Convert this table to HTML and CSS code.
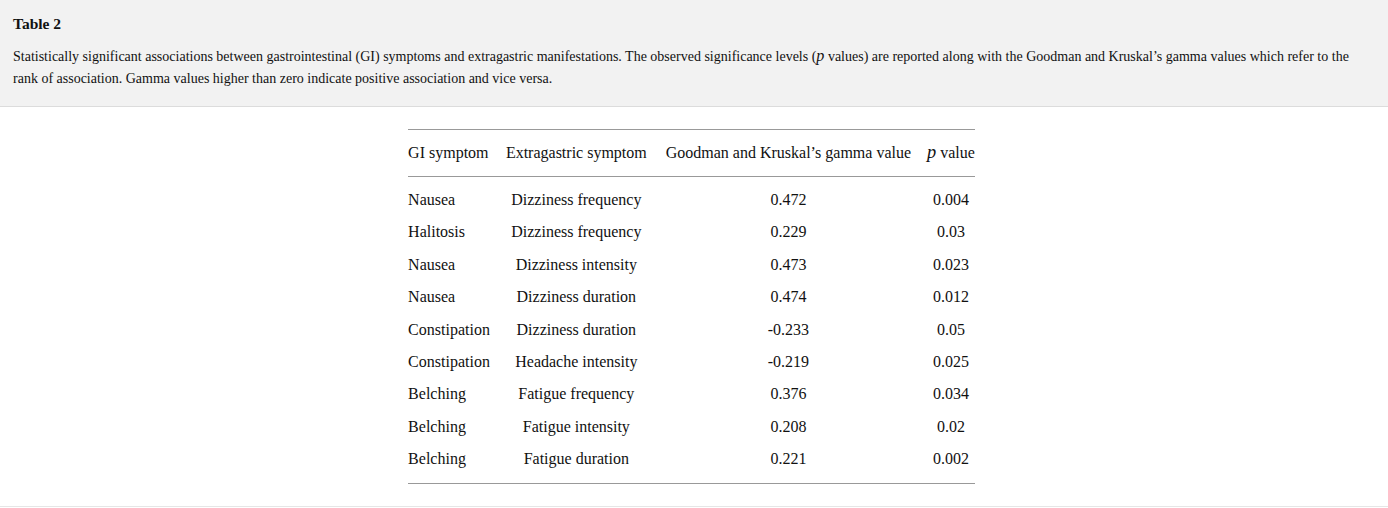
FILE: index.html
```html
<!DOCTYPE html>
<html>
<head>
<meta charset="utf-8">
<link rel="stylesheet" href="styles.css">
</head>
<body>
<div class="caption-box">
  <div class="caption-title">Table 2</div>
  <div class="caption-text">Statistically significant associations between gastrointestinal (GI) symptoms and extragastric manifestations. The observed significance levels (<i class="pv">p</i> values) are reported along with the Goodman and Kruskal’s gamma values which refer to the rank of association. Gamma values higher than zero indicate positive association and vice versa.</div>
</div>
<div class="table-wrap">
  <table class="data">
    <thead>
      <tr>
        <th class="c1">GI symptom</th>
        <th>Extragastric symptom</th>
        <th class="c3">Goodman and Kruskal’s gamma value</th>
        <th class="c4"><i class="pv">p</i> value</th>
      </tr>
    </thead>
    <tbody>
      <tr><td class="c1">Nausea</td><td>Dizziness frequency</td><td class="c3">0.472</td><td class="c4">0.004</td></tr>
      <tr><td class="c1">Halitosis</td><td>Dizziness frequency</td><td class="c3">0.229</td><td class="c4">0.03</td></tr>
      <tr><td class="c1">Nausea</td><td>Dizziness intensity</td><td class="c3">0.473</td><td class="c4">0.023</td></tr>
      <tr><td class="c1">Nausea</td><td>Dizziness duration</td><td class="c3">0.474</td><td class="c4">0.012</td></tr>
      <tr><td class="c1">Constipation</td><td>Dizziness duration</td><td class="c3">-0.233</td><td class="c4">0.05</td></tr>
      <tr><td class="c1">Constipation</td><td>Headache intensity</td><td class="c3">-0.219</td><td class="c4">0.025</td></tr>
      <tr><td class="c1">Belching</td><td>Fatigue frequency</td><td class="c3">0.376</td><td class="c4">0.034</td></tr>
      <tr><td class="c1">Belching</td><td>Fatigue intensity</td><td class="c3">0.208</td><td class="c4">0.02</td></tr>
      <tr><td class="c1">Belching</td><td>Fatigue duration</td><td class="c3">0.221</td><td class="c4">0.002</td></tr>
    </tbody>
  </table>
</div>
</body>
</html>
```

FILE: styles.css
```css
html, body {
  margin: 0;
  padding: 0;
  background: #ffffff;
  font-family: "Liberation Serif", "Times New Roman", serif;
  color: #111111;
}
.caption-box {
  background: #f2f2f2;
  border-bottom: 1px solid #dcdcdc;
  padding: 15px 30px 13px 13px;
  height: 78px;
}
.caption-title {
  font-weight: bold;
  font-size: 15.5px;
  line-height: 18px;
}
.caption-text {
  font-size: 14px;
  line-height: 22px;
  margin-top: 13px;
}
.pv {
  font-style: italic;
  font-size: 1.15em;
  line-height: 0;
}
.table-wrap {
  display: flex;
  justify-content: center;
  padding: 22px 0 22px 0;
  border-bottom: 1px solid #e6e6e6;
}
.data {
  border-collapse: collapse;
  border-top: 1px solid #999999;
  border-bottom: 1px solid #999999;
  font-size: 16px;
  margin-left: -5px;
}
.data th {
  font-weight: normal;
  padding: 13px 8px 13px 8px;
  line-height: 20px;
  border-bottom: 1px solid #999999;
  text-align: center;
  white-space: nowrap;
}
.data td {
  padding: 6px 8px;
  line-height: 20.4px;
  text-align: center;
  white-space: nowrap;
}
.data tbody tr:first-child td { padding-top: 13px; }
.data tbody tr:last-child td { padding-bottom: 13px; }
.data .c1 { text-align: left; padding-left: 0; }
.data .c3 { padding-left: 11px; }
.data .c4 { padding-right: 0; }
```
